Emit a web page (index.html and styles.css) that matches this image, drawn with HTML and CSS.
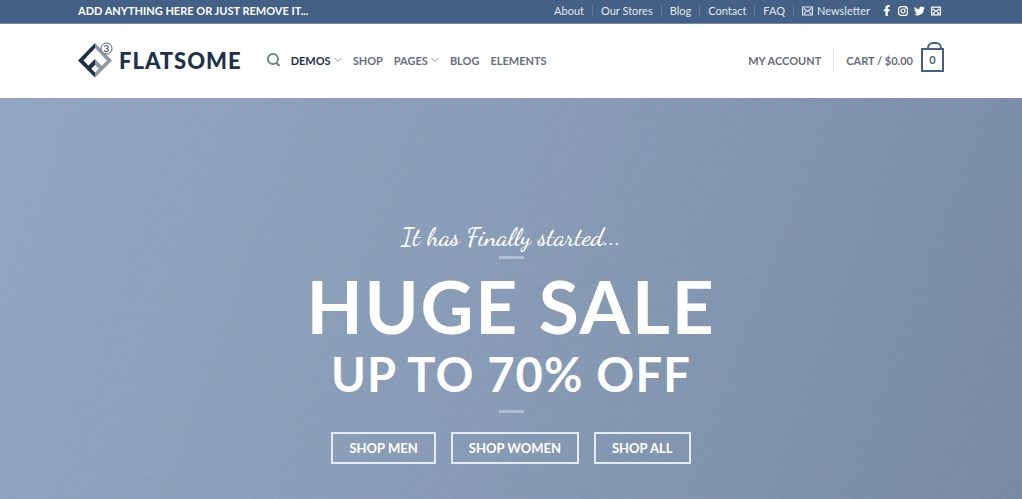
FILE: index.html
```html
<!DOCTYPE html>
<html lang="en">
<head>
  <meta charset="UTF-8">
  <meta name="viewport" content="width=device-width, initial-scale=1">
  <title>Flatsome</title>
  <link rel="stylesheet" href="styles.css">
</head>
<body>

  <header class="header">
    <div class="top-bar">
      <div class="container top-bar-inner">
        <strong class="top-text">Add anything here or just remove it...</strong>
        <div class="top-right">
          <nav class="top-nav" aria-label="Secondary">
            <a href="#">About</a>
            <a href="#">Our Stores</a>
            <a href="#">Blog</a>
            <a href="#">Contact</a>
            <a href="#">FAQ</a>
            <a href="#" class="newsletter">
              <svg width="11" height="10" viewBox="0 0 11 10" fill="none" stroke="currentColor" aria-hidden="true"><path d="M.6 1h9.800v8H.6zM2 2.500l3.500 3 3.500-3M2 8l2-2.500M9 8L7 5.500" stroke-width="1.200"/></svg>
              Newsletter
            </a>
          </nav>
          <div class="social">
            <a href="#" aria-label="Facebook">
              <svg width="10" height="11" viewBox="0 0 10 11" fill="currentColor" aria-hidden="true"><path d="M3.500 11V6.200H1.800V4.200h1.700V2.800C3.500 1 4.600 0 6.300 0h1.500v2H6.700c-.7 0-.9.3-.9 1v1.200h2l-.3 2H5.800V11z"/></svg>
            </a>
            <a href="#" aria-label="Instagram">
              <svg width="10" height="10" viewBox="0 0 10 10" fill="none" stroke="currentColor" stroke-width="1.200" aria-hidden="true"><rect x=".6" y=".6" width="8.800" height="8.800" rx="2.500"/><circle cx="5" cy="5" r="2"/><circle cx="7.600" cy="2.400" r=".2"/></svg>
            </a>
            <a href="#" aria-label="Twitter">
              <svg width="11" height="10" viewBox="0 0 24 22" fill="currentColor" aria-hidden="true"><path d="M24 3.600a10 10 0 0 1-2.800.8 5 5 0 0 0 2.100-2.700 10 10 0 0 1-3.100 1.200 4.900 4.900 0 0 0-8.400 4.500A14 14 0 0 1 1.700 2.200a4.900 4.900 0 0 0 1.500 6.600A5 5 0 0 1 1 8.200a4.900 4.900 0 0 0 3.900 4.900 5 5 0 0 1-2.200.1 4.900 4.900 0 0 0 4.600 3.400A9.900 9.900 0 0 1 0 18.600 14 14 0 0 0 21.500 6.100 10 10 0 0 0 24 3.600z"/></svg>
            </a>
            <a href="#" aria-label="Email">
              <svg width="10" height="10" viewBox="0 0 10 10" fill="none" stroke="currentColor" aria-hidden="true"><path d="M.7 1.200h8.600v7.600H.7zM2 3l3 2.500L8 3M2.200 7.700l1.500-1.700M7.800 7.700L6.300 6" stroke-width="1.300"/></svg>
            </a>
          </div>
        </div>
      </div>
    </div>

    <div class="container main-bar">
      <a href="#" class="logo">
        <svg width="36" height="36" viewBox="0 0 36 36" aria-hidden="true">
          <path d="M17 1l17 17.500L17 35.500v-5l12-12L17 6z" fill="#8e97a5"/>
          <path d="M17 1v5L5.500 18.500 17 30.500v5L0 18.500z" fill="#20304a"/>
          <path d="M17 17l8 8-3 3-5-5z" fill="#8e97a5"/>
          <path d="M17 17v6l-5 5-3-3z" fill="#20304a"/>
          <circle cx="28.500" cy="6.500" r="5.500" fill="#fff" stroke="#4a5a70"/>
          <text x="28.500" y="10" class="logo-mark">3</text>
        </svg>
        <span>FLATSOME</span>
      </a>

      <nav class="main-nav" aria-label="Main">
        <button type="button" class="search" aria-label="Search">
          <svg width="13" height="14" viewBox="0 0 13 14" fill="none" stroke="currentColor" stroke-width="2" aria-hidden="true"><circle cx="6" cy="6" r="5"/><path d="M9 9.500l3.500 3.500"/></svg>
        </button>
        <a href="#" class="active">Demos
          <svg width="8" height="6" viewBox="0 0 8 6" fill="none" stroke="#8b98a8" aria-hidden="true"><path d="M.5 1L4 4.500 7.500 1"/></svg>
        </a>
        <a href="#">Shop</a>
        <a href="#">Pages
          <svg width="8" height="6" viewBox="0 0 8 6" fill="none" stroke="#8b98a8" aria-hidden="true"><path d="M.5 1L4 4.500 7.500 1"/></svg>
        </a>
        <a href="#">Blog</a>
        <a href="#">Elements</a>
      </nav>

      <div class="account">
        <a href="#">My account</a>
        <a href="#" class="cart">Cart / $0.00 <span class="cart-icon">0</span></a>
      </div>
    </div>
  </header>

  <main class="hero">
    <p class="tagline">It has Finally started...</p>
    <div class="divider"></div>
    <h1>Huge Sale</h1>
    <h2>Up to 70% off</h2>
    <div class="divider"></div>
    <div class="buttons">
      <a href="#">Shop men</a>
      <a href="#">Shop women</a>
      <a href="#">Shop all</a>
    </div>
  </main>

</body>
</html>
```
FILE: styles.css
```css
* {
  box-sizing: border-box;
}

body {
  margin: 0;
  min-height: 100vh;
  display: flex;
  flex-direction: column;
  font-family: Lato, sans-serif;
  font-size: 11px;
  color: #666e7a;
}

a {
  color: inherit;
  text-decoration: none;
}

svg {
  display: block;
  flex: none;
}

.container {
  padding: 0 78px;
}

/* top bar */
.top-bar {
  background: #446084;
  border-bottom: 1px solid #7189a8;
  color: #fff;
}

.top-bar-inner {
  display: flex;
  justify-content: space-between;
  align-items: center;
  height: 23px;
  padding-bottom: 2px;
}

.top-text {
  text-transform: uppercase;
  font-weight: 700;
}

.top-right,
.top-nav,
.social {
  display: flex;
  align-items: center;
}

.top-right {
  gap: 12px;
  padding-right: 3px;
}

.top-nav a {
  line-height: 13px;
  color: #e3e8ef;
}

.top-nav a + a {
  margin-left: 8px;
  padding-left: 8px;
  border-left: 1px solid #5f7899;
}

.newsletter {
  display: flex;
  align-items: center;
  gap: 4px;
}

.social {
  gap: 6px;
}

/* main header */
.main-bar {
  display: flex;
  align-items: center;
  height: 74px;
  padding-bottom: 2px;
  text-transform: uppercase;
  font-weight: 700;
}

.logo {
  display: flex;
  align-items: center;
  gap: 5px;
  margin-right: 25px;
  font-size: 22px;
  font-weight: 900;
  letter-spacing: 1px;
  color: #20304a;
}

.logo-mark {
  font-size: 10px;
  font-weight: 400;
  letter-spacing: 0;
  text-anchor: middle;
  fill: #20304a;
}

.main-nav,
.account {
  display: flex;
  align-items: center;
}

.main-nav {
  gap: 11px;
}

.main-nav a {
  display: flex;
  align-items: center;
  gap: 3px;
}

.main-nav .active {
  color: #20304a;
}

.search {
  padding: 0;
  border: 0;
  background: none;
  color: #7a818b;
}

.account {
  margin-left: auto;
}

.cart {
  display: flex;
  align-items: center;
  gap: 8px;
  height: 24px;
  margin-left: 12px;
  padding-left: 12px;
  border-left: 1px solid #e6e9ec;
}

.cart-icon {
  position: relative;
  width: 23px;
  border: 2px solid #446084;
  line-height: 20px;
  text-align: center;
  color: #446084;
}

/* bag handle */
.cart-icon::before {
  content: "";
  position: absolute;
  left: 4px;
  bottom: 100%;
  width: 11px;
  height: 6px;
  border: 2px solid #446084;
  border-bottom: 0;
  border-radius: 6px 6px 0 0;
}

/* hero */
.hero {
  flex: 1;
  display: flex;
  flex-direction: column;
  align-items: center;
  padding: 120px 20px 35px;
  /* fine paper grain over the blue fade */
  background:
    url("data:image/svg+xml,%3Csvg xmlns='http://www.w3.org/2000/svg' width='200' height='200'%3E%3Cfilter id='n'%3E%3CfeTurbulence type='fractalNoise' baseFrequency='.5' numOctaves='2' stitchTiles='stitch'/%3E%3CfeColorMatrix type='saturate' values='0'/%3E%3C/filter%3E%3Crect width='200' height='200' filter='url(%23n)' opacity='.12'/%3E%3C/svg%3E"),
    linear-gradient(110deg, #8fa5c1 0%, #8599b5 50%, #7488a2 100%);
  color: #fff;
  text-align: center;
}

.tagline {
  margin: 0;
  font-family: "Dancing Script", "Liberation Serif", cursive;
  font-size: 26px;
  font-weight: 500;
  line-height: 38px;
}

.divider {
  width: 25px;
  height: 3px;
  background: rgba(255, 255, 255, 0.35);
}

h1,
h2 {
  margin: 0;
  font-weight: 700;
  text-transform: uppercase;
  letter-spacing: 0.025em;
}

h1 {
  margin-top: 7px;
  font-size: 73px;
  line-height: 80px;
}

h2 {
  margin-bottom: 8px;
  font-size: 47px;
  line-height: 56px;
}

.buttons {
  display: flex;
  flex-wrap: wrap;
  justify-content: center;
  gap: 15px;
  margin-top: 19px;
}

.buttons a {
  padding: 0 16px;
  border: 2px solid #e6ebf1;
  font-size: 13px;
  font-weight: 700;
  line-height: 28px;
  text-transform: uppercase;
}
```
